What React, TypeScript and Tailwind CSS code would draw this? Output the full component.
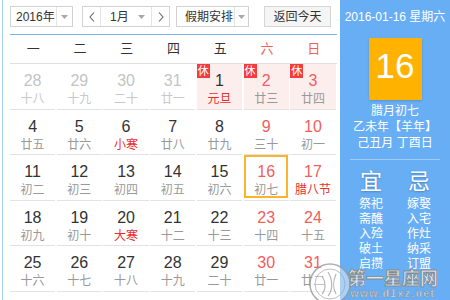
type Day = {
  n: number
  lunar: string
  prev?: boolean
  red?: boolean
  fest?: boolean
  rest?: boolean
  sel?: boolean
}

const days: Day[] = [
  { n: 28, lunar: '十八', prev: true },
  { n: 29, lunar: '十九', prev: true },
  { n: 30, lunar: '二十', prev: true },
  { n: 31, lunar: '廿一', prev: true },
  { n: 1, lunar: '元旦', fest: true, rest: true },
  { n: 2, lunar: '廿三', red: true, rest: true },
  { n: 3, lunar: '廿四', red: true, rest: true },
  { n: 4, lunar: '廿五' },
  { n: 5, lunar: '廿六' },
  { n: 6, lunar: '小寒', fest: true },
  { n: 7, lunar: '廿八' },
  { n: 8, lunar: '廿九' },
  { n: 9, lunar: '三十', red: true },
  { n: 10, lunar: '初一', red: true },
  { n: 11, lunar: '初二' },
  { n: 12, lunar: '初三' },
  { n: 13, lunar: '初四' },
  { n: 14, lunar: '初五' },
  { n: 15, lunar: '初六' },
  { n: 16, lunar: '初七', red: true, sel: true },
  { n: 17, lunar: '腊八节', red: true, fest: true },
  { n: 18, lunar: '初九' },
  { n: 19, lunar: '初十' },
  { n: 20, lunar: '大寒', fest: true },
  { n: 21, lunar: '十二' },
  { n: 22, lunar: '十三' },
  { n: 23, lunar: '十四', red: true },
  { n: 24, lunar: '十五', red: true },
  { n: 25, lunar: '十六' },
  { n: 26, lunar: '十七' },
  { n: 27, lunar: '十八' },
  { n: 28, lunar: '十九' },
  { n: 29, lunar: '二十' },
  { n: 30, lunar: '廿一', red: true },
  { n: 31, lunar: '廿二', red: true },
]

const weekdays = ['一', '二', '三', '四', '五', '六', '日']
const yi = ['祭祀', '斋醮', '入殓', '破土', '启攒']
const ji = ['嫁娶', '入宅', '作灶', '纳采', '订盟']

function Caret() {
  return (
    <svg width="7" height="4" viewBox="0 0 7 4">
      <path d="M0 0h7L3.5 4z" fill="#a8a8a8" />
    </svg>
  )
}

function Chevron({ dir }: { dir: 'left' | 'right' }) {
  return (
    <svg width="6" height="10" viewBox="0 0 6 10">
      <path
        d={dir === 'left' ? 'M5 0.5L1 5l4 4.5' : 'M1 0.5L5 5l-4 4.5'}
        fill="none"
        stroke="#666"
        strokeWidth="1.1"
      />
    </svg>
  )
}

function Cell({ d }: { d: Day }) {
  const num = d.prev ? 'text-[#c4c4c4]' : d.red ? 'text-[#f25d5d]' : 'text-[#333]'
  const lun = d.prev ? 'text-[#c8c8c8]' : d.fest ? 'text-[#ee2c2c]' : 'text-[#999]'
  return (
    <div className="h-[45.5px] pr-[1.5px]">
      <div
        className={`relative h-full border-b border-[#e3e3e3] ${d.rest ? 'bg-[#fdeeee]' : ''}`}
      >
        {d.rest && (
          <span className="absolute left-0 top-0 flex h-[14px] w-[13px] items-center justify-center bg-[#f43c3c] text-[11px] leading-none text-white">
            休
          </span>
        )}
        <div
          className={`mx-auto flex h-[42.5px] flex-col items-center ${
            d.sel ? 'w-[44px] border-2 border-[#fbb52d] pt-[5px]' : 'pt-[7px]'
          }`}
        >
          <span className={`text-[16px] leading-[20px] ${num}`}>{d.n}</span>
          <span className={`whitespace-nowrap text-[12px] leading-[16px] ${lun}`}>{d.lunar}</span>
        </div>
      </div>
    </div>
  )
}

export default function App() {
  return (
    <div className="relative flex h-[300px] w-[450px] overflow-hidden bg-white font-['Liberation_Sans','Noto_Sans_CJK_SC',sans-serif]">
      <div className="ml-[2px] w-[338px] border-l border-[#a6cff5] pl-[7px] pr-[2px]">
        <div className="mt-[6px] flex h-[21px] whitespace-nowrap text-[12px] text-[#333]">
          <div className="flex w-[63px] border border-[#d2d2d2] bg-white">
            <span className="flex flex-1 items-center pl-[5px]">2016年</span>
            <span className="flex w-[16px] items-center justify-center border-l border-[#e4e4e4]">
              <Caret />
            </span>
          </div>
          <div className="ml-[9px] flex w-[88px] border border-[#d2d2d2] bg-white">
            <span className="flex w-[18px] items-center justify-center border-r border-[#e4e4e4]">
              <Chevron dir="left" />
            </span>
            <span className="flex flex-1 items-center justify-between pl-[9px] pr-[6px]">
              1月
              <Caret />
            </span>
            <span className="flex w-[18px] items-center justify-center border-l border-[#e4e4e4]">
              <Chevron dir="right" />
            </span>
          </div>
          <div className="ml-[6px] flex w-[73px] border border-[#d2d2d2] bg-white">
            <span className="flex flex-1 items-center pl-[8px]">假期安排</span>
            <span className="flex w-[14px] items-center justify-center border-l border-[#e4e4e4]">
              <Caret />
            </span>
          </div>
          <button className="ml-[15px] flex w-[67px] items-center justify-center border border-[#d6d6d6] bg-[#f5f5f5] text-[12px] text-[#333]">
            返回今天
          </button>
        </div>

        <div className="mt-[7px] w-[327px] border-t border-[#76b6f3]">
          <div className="grid h-[29px] grid-cols-7 border-b border-[#e0e0e0] text-[13px]">
            {weekdays.map((w, i) => (
              <span
                key={w}
                className={`flex items-center justify-center ${i >= 5 ? 'text-[#f25d5d]' : 'text-[#333]'}`}
              >
                {w}
              </span>
            ))}
          </div>
          <div className="grid grid-cols-7">
            {days.map((d, i) => (
              <Cell key={i} d={d} />
            ))}
          </div>
        </div>
      </div>

      <div className="flex w-[110px] flex-col items-center bg-[#68aef5] text-white">
        <div className="mt-[10px] text-[12px] leading-[14px]">2016-01-16 星期六</div>
        <div className="mt-[14px] flex h-[62px] w-[53px] justify-center bg-[#ffb300] pt-[10px] shadow-[0_1px_2px_rgba(0,0,0,0.15)]">
          <span className="font-['Liberation_Sans',sans-serif] text-[35px] leading-[35px]">16</span>
        </div>
        <div className="mt-[3px] flex flex-col items-center text-[12px] leading-[16px]">
          <span>腊月初七</span>
          <span>乙未年【羊年】</span>
          <span>己丑月 丁酉日</span>
        </div>
        <div className="mt-[8px] h-px w-[90px] bg-[#a3cdf8]" />
        <div className="mt-[9px] flex">
          <div className="flex w-[48px] flex-col items-center">
            <span className="text-[22px] leading-[26px] [text-shadow:0_1px_2px_rgba(0,0,0,0.25)]">宜</span>
            <div className="mt-[2px] flex flex-col items-center text-[12px] leading-[15px]">
              {yi.map((t) => (
                <span key={t}>{t}</span>
              ))}
            </div>
          </div>
          <div className="flex w-[48px] flex-col items-center">
            <span className="text-[22px] leading-[26px] [text-shadow:0_1px_2px_rgba(0,0,0,0.25)]">忌</span>
            <div className="mt-[2px] flex flex-col items-center text-[12px] leading-[15px]">
              {ji.map((t) => (
                <span key={t}>{t}</span>
              ))}
            </div>
          </div>
        </div>
      </div>

      {/* watermark */}
      <div className="pointer-events-none absolute bottom-0 right-0 flex h-[40px] w-[142px] items-end">
        <svg width="44" height="40" viewBox="0 0 44 40" className="opacity-80">
          <circle cx="22" cy="24" r="20" fill="rgba(255,255,255,0.55)" stroke="#9a9a9a" strokeWidth="1.5" />
          <circle cx="22" cy="24" r="15" fill="none" stroke="#b0b0b0" strokeWidth="1" />
          <path d="M14 16c4 6 4 14 0 18M20 12c5 8 5 18 0 24M28 14c-3 7-3 15 0 20" fill="none" stroke="#a5a5a5" strokeWidth="1.2" />
        </svg>
        <div className="-ml-[4px] flex flex-col items-center">
          <span className="text-[18px] font-bold leading-[17px] text-[rgba(255,255,255,0.75)] [-webkit-text-stroke:0.8px_#8a8a8a]">
            第一星座网
          </span>
          <span className="text-[10px] font-bold leading-[12px] tracking-[1.6px] text-[rgba(255,255,255,0.75)] [-webkit-text-stroke:0.5px_#8a8a8a]">
            www.d1xz.net
          </span>
        </div>
      </div>
    </div>
  )
}
